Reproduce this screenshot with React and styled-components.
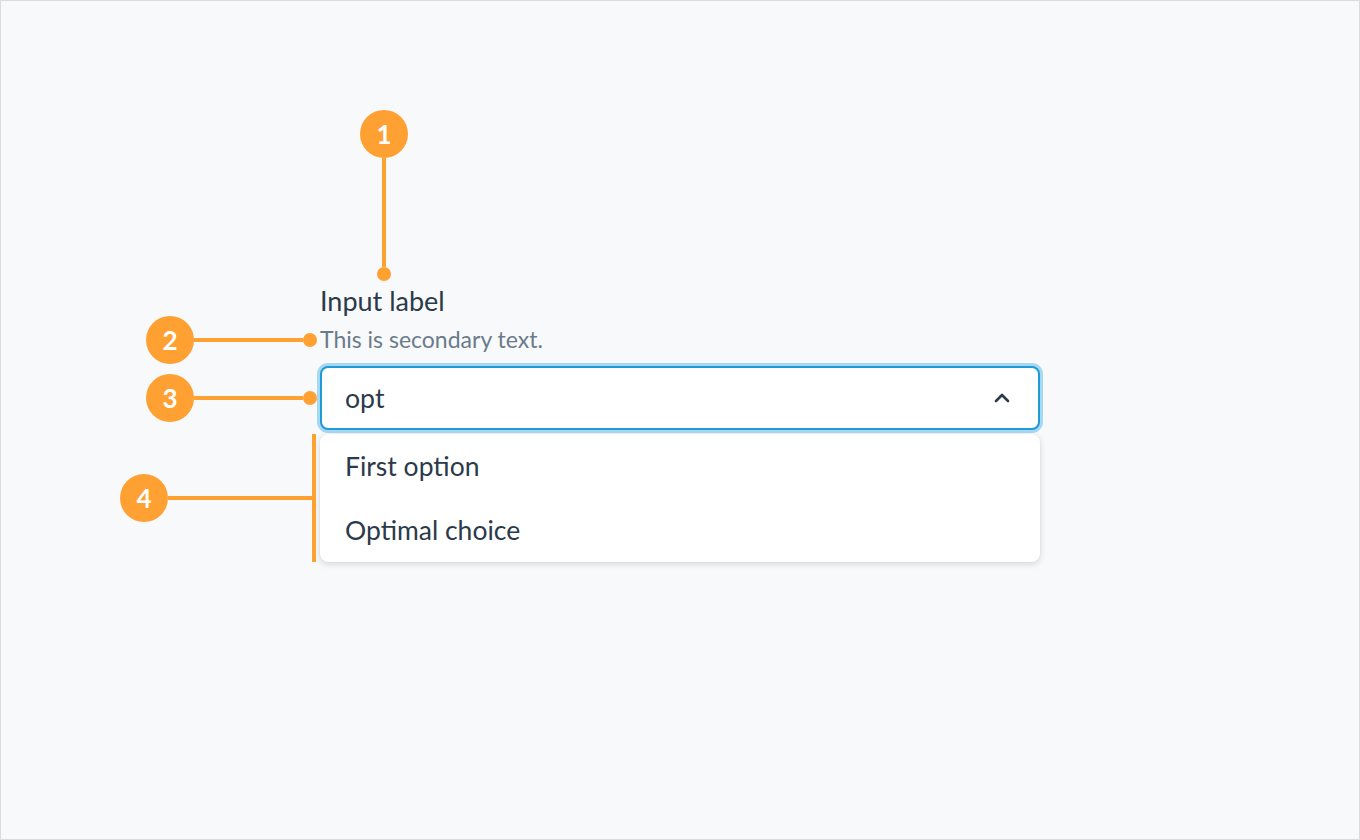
import styled, { createGlobalStyle } from 'styled-components';

const ORANGE = '#ffa033';

const GlobalStyle = createGlobalStyle`
  html, body {
    margin: 0;
    padding: 0;
  }
  body {
    font-family: 'Lato', 'Noto Sans', sans-serif;
    color: #2b3a4a;
  }
`;

function ChevronUp() {
  return (
    <svg width='16' height='10' viewBox='0 0 16 10' fill='none'>
      <path
        d='M2 8 L8 2 L14 8'
        stroke='#2b3a4a'
        strokeWidth='2.6'
        strokeLinecap='round'
        strokeLinejoin='round'
      />
    </svg>
  );
}

export default function App() {
  return (
    <Frame>
      <GlobalStyle />
      <Field>
        <Label>Input label</Label>
        <Hint>This is secondary text.</Hint>
        <Combo>
          <ComboValue>opt</ComboValue>
          <ChevronUp />
        </Combo>
        <Menu>
          <Option>First option</Option>
          <Option>Optimal choice</Option>
        </Menu>
      </Field>

      {/* callout 1: label */}
      <VCallout $left={360} $top={110}>
        <Badge>1</Badge>
        <VStem />
        <Dot />
      </VCallout>

      {/* callout 2: secondary text */}
      <HCallout $left={146} $top={316} $width={171}>
        <Badge>2</Badge>
        <HStem />
        <Dot />
      </HCallout>

      {/* callout 3: input */}
      <HCallout $left={146} $top={374} $width={171}>
        <Badge>3</Badge>
        <HStem />
        <Dot />
      </HCallout>

      {/* callout 4: menu */}
      <BracketCallout $left={120} $top={434} $width={196}>
        <Badge>4</Badge>
        <HStem />
        <Bracket />
      </BracketCallout>
    </Frame>
  );
}

const Frame = styled.div`
  position: relative;
  box-sizing: border-box;
  width: 100vw;
  height: 100vh;
  overflow: hidden;
  background: #f8f9fa;
  box-shadow: inset 0 0 0 1px #d9dbdf;
  padding: 285px 0 0 320px;
`;

const Field = styled.div`
  width: 720px;
  display: flex;
  flex-direction: column;
`;

const Label = styled.div`
  font-size: 27px;
  line-height: 32px;
  color: #2b3a4a;
`;

const Hint = styled.div`
  margin-top: 7px;
  font-size: 23px;
  line-height: 30px;
  color: #6b7b8b;
`;

const Combo = styled.div`
  margin-top: 12px;
  box-sizing: border-box;
  height: 64px;
  display: flex;
  align-items: center;
  justify-content: space-between;
  padding: 0 28px 0 23px;
  background: #fff;
  border: 2px solid #1e9ad6;
  border-radius: 8px;
  box-shadow: 0 0 0 3px #a6d9f1;
`;

const ComboValue = styled.span`
  font-size: 26.67px;
  color: #2b3a4a;
`;

const Menu = styled.div`
  margin-top: 4px;
  background: #fff;
  border-radius: 8px;
  box-shadow: 0 2px 6px rgba(30, 40, 55, 0.16), 0 0 1px rgba(30, 40, 55, 0.12);
  display: flex;
  flex-direction: column;
`;

const Option = styled.div`
  height: 64px;
  display: flex;
  align-items: center;
  padding: 0 25px;
  font-size: 26.5px;
  color: #2b3a4a;
`;

/* annotation overlays */

const Callout = styled.div`
  position: absolute;
  left: ${(p) => p.$left}px;
  top: ${(p) => p.$top}px;
  display: flex;
  align-items: center;
`;

const VCallout = styled(Callout)`
  flex-direction: column;
  width: 48px;
`;

const HCallout = styled(Callout)`
  width: ${(p) => p.$width}px;
  height: 48px;
`;

const BracketCallout = styled(Callout)`
  width: ${(p) => p.$width}px;
  height: 128px;
`;

const Badge = styled.div`
  flex-shrink: 0;
  width: 48px;
  height: 48px;
  border-radius: 50%;
  background: ${ORANGE};
  color: #fff;
  display: flex;
  align-items: center;
  justify-content: center;
  font-family: 'Lato', sans-serif;
  font-weight: 700;
  font-size: 26px;
  line-height: 1;
`;

const Dot = styled.div`
  flex-shrink: 0;
  width: 14px;
  height: 14px;
  border-radius: 50%;
  background: ${ORANGE};
`;

const HStem = styled.div`
  flex: 1;
  height: 4px;
  background: ${ORANGE};
`;

const VStem = styled.div`
  width: 4px;
  height: 109px;
  background: ${ORANGE};
`;

const Bracket = styled.div`
  flex-shrink: 0;
  align-self: stretch;
  width: 4px;
  background: ${ORANGE};
`;
